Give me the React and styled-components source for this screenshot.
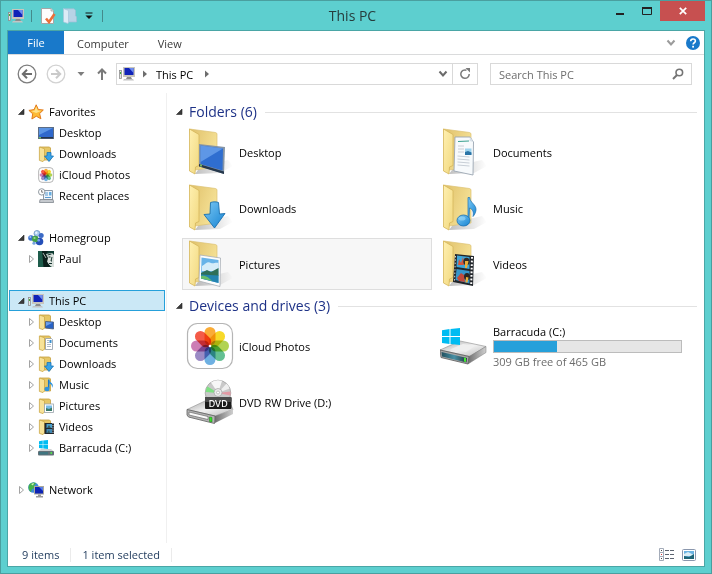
import React, { useState } from 'react';
import styled, { createGlobalStyle } from 'styled-components';

const GlobalStyle = createGlobalStyle`
  * {
    box-sizing: border-box;
  }

  body {
    margin: 0;
    background: #5dcfcf;
  }

  body, button, input {
    font-family: "Open Sans", "Noto Sans", sans-serif;
    font-size: 11px;
    color: #000;
  }

  button {
    padding: 0;
    border: none;
    background: none;
    cursor: default;
  }

  svg {
    display: block;
    flex: none;
  }
`;

const Window = styled.div`
  display: flex;
  flex-direction: column;
  min-height: 100vh;
  padding: 0 6px 6px;
  border: 1px solid #4a9f9f;
  background: #5dcfcf;
`;

const TitleBar = styled.header`
  display: grid;
  grid-template-columns: 1fr auto 1fr;
  height: 29px;
`;

const QuickAccess = styled.div`
  display: flex;
  align-items: center;
  gap: 7px;
  padding: 1px 0 0 1px;
`;

const QuickButton = styled.button`
  display: flex;
  justify-content: center;
  width: ${(props) => props.$width || 16}px;
`;

const QuickDivider = styled.span`
  width: 1px;
  height: 12px;
  background: #448a8b;
`;

const Title = styled.h1`
  margin: 0 7px 0 0;
  font-size: 14px;
  font-weight: 400;
  line-height: 29px;
  color: #263c3c;
`;

const WindowButtons = styled.div`
  display: flex;
  justify-content: flex-end;
`;

const WindowButton = styled.button`
  display: flex;
  align-items: center;
  justify-content: center;
  width: ${(props) => (props.$close ? 45 : 27)}px;
  height: 20px;
  background: ${(props) => (props.$close ? '#c75050' : 'transparent')};
`;

const Panel = styled.div`
  display: flex;
  flex: 1;
  flex-direction: column;
  border: 1px solid #4aa6a6;
  background: #fff;
`;

const Ribbon = styled.div`
  display: flex;
  align-items: center;
  height: 24px;
  border-bottom: 1px solid #dadbdc;
`;

const RibbonTab = styled.button`
  align-self: stretch;
  min-width: 56px;
  padding: 0 13px;
  line-height: 22px;
  color: ${(props) => (props.$file ? '#fff' : '#3b3b3b')};
  background: ${(props) => (props.$file ? '#1979ca' : 'transparent')};

  & + & {
    padding-top: 2px;
  }
`;

const IconButton = styled.button`
  display: flex;
  align-items: center;
  justify-content: center;
  width: ${(props) => props.$width || 22}px;
  height: 20px;
`;

const Spacer = styled.div`
  flex: 1;
`;

const AddressRow = styled.div`
  display: flex;
  align-items: center;
  height: 38px;
  padding: 0 12px 0 8px;
`;

const AddressBox = styled.div`
  display: flex;
  flex: 1;
  align-items: center;
  height: 22px;
  margin-right: 12px;
  padding-left: 2px;
  border: 1px solid #d9d9d9;
`;

const LocationButton = styled.button`
  padding-right: 4px;
`;

const RefreshButton = styled(IconButton)`
  border-left: 1px solid #d9d9d9;
`;

const SearchBox = styled.label`
  display: flex;
  align-items: center;
  width: 202px;
  height: 22px;
  padding: 0 7px 0 8px;
  border: 1px solid #d9d9d9;
`;

const SearchInput = styled.input`
  flex: 1;
  min-width: 0;
  padding: 0;
  border: none;
  outline: none;

  &::placeholder {
    color: #6d6d6d;
    opacity: 1;
  }
`;

const Main = styled.div`
  display: flex;
  flex: 1;
`;

const NavPane = styled.nav`
  display: flex;
  flex: none;
  flex-direction: column;
  gap: 21px;
  width: 159px;
  padding: 8px 1px 8px;
  border-right: 1px solid #f0f0f0;
`;

const NavList = styled.ul`
  margin: 0;
  padding: 0;
  list-style: none;
`;

const NavItem = styled.button`
  display: flex;
  align-items: center;
  width: 100%;
  height: 21px;
  padding-left: ${(props) => (props.$child ? 18 : 8)}px;
  border: 1px solid ${(props) => (props.$active ? '#26a0da' : 'transparent')};
  background: ${(props) => (props.$active ? '#cbe8f6' : 'transparent')};
  white-space: nowrap;

  span {
    margin-left: 5px;
  }
`;

const Arrow = styled.svg`
  margin-right: 3px;
`;

const Content = styled.main`
  flex: 1;
  padding: 9px 7px 8px 9px;
`;

const GroupHeader = styled.h2`
  display: flex;
  align-items: center;
  height: 20px;
  margin: 0;
  font-size: 14px;
  font-weight: 400;
  line-height: 20px;
  color: #1e3287;

  svg {
    margin-right: 6px;
  }

  &::after {
    content: "";
    flex: 1;
    height: 1px;
    margin-left: 8px;
    background: #e2e2e2;
  }
`;

const Tiles = styled.div`
  display: grid;
  grid-template-columns: repeat(auto-fill, 250px);
  gap: 4px;
  padding: 4px 0 6px 6px;
`;

const Tile = styled.button`
  display: flex;
  align-items: center;
  gap: 5px;
  height: 52px;
  padding: 0 3px;
  border: 1px solid ${(props) => (props.$active ? '#dedede' : 'transparent')};
  background: ${(props) => (props.$active ? '#f7f7f7' : 'transparent')};
  text-align: left;
`;

const DriveInfo = styled.div`
  width: 189px;
  line-height: 17px;
`;

const DriveBar = styled.div`
  height: 13px;
  border: 1px solid #bcbcbc;
  background: #e6e6e6;
`;

const DriveFill = styled.div`
  height: 100%;
  background: #26a0da;
`;

const DriveNote = styled.div`
  color: #6d6d6d;
`;

const StatusBar = styled.footer`
  display: flex;
  align-items: center;
  height: 23px;
  padding: 0 4px 0 14px;
  color: #1e395b;
`;

const StatusText = styled.span`
  height: 14px;
  margin-right: 11px;
  padding-right: 11px;
  border-right: 1px solid #ebebeb;
  line-height: 14px;
`;

/* ---------- small icons ---------- */

const PcIcon = () => (
  <svg width="16" height="16" viewBox="0 0 16 16">
    <rect x="0.5" y="4.5" width="2" height="8" fill="#e4e4e4" stroke="#8d8d8d" strokeWidth="0.8" />
    <rect x="1" y="6" width="1" height="2" fill="#3fae39" />
    <path d="M4 1h12v10H4z" fill="#c9c6bd" />
    <path d="M5.500 2h9v7h-9z" fill="#1023b8" />
    <path d="M10 2h4.500v5z" fill="#6f8df0" />
    <path d="M8 11h4l1 2H7z" fill="#8c8c8c" />
    <path d="M5 13h9l1 1.500H4z" fill="#c4c4c4" />
  </svg>
);

const StarIcon = () => (
  <svg width="16" height="16" viewBox="0 0 16 16">
    <path d="M8.200 0.800l2.100 4.700 5 .5-3.700 3.600 1.300 5.200L8.300 12.200 3.900 15l.8-5.200L.9 6.400l5.200-.8z" fill="#fdbb35" stroke="#e27a1c" strokeWidth="1" strokeLinejoin="round" />
    <path d="M8.200 2.500l1.500 3.900 3.800.3-5.300 2.200-5-1.900 3.500-.6z" fill="#ffe38b" />
  </svg>
);

const DesktopIcon = () => (
  <svg width="16" height="16" viewBox="0 0 16 16">
    <rect x="0.500" y="2.500" width="15" height="11" fill="#2f68cc" stroke="#5c6d85" />
    <path d="M1 3h14L1 10z" fill="#5b94e4" />
    <rect x="1" y="12" width="14" height="1.500" fill="#26344c" />
    <rect x="1" y="12" width="2" height="1.500" fill="#6db868" />
  </svg>
);

const overlays = {
  desktop: (
    <>
      <path d="M7.500 7.500l8 .5v7l-8-1z" fill="#2862c4" stroke="#4b5d78" strokeWidth="0.800" />
      <path d="M8 8l6.500.7L8 12z" fill="#6ca0ec" />
    </>
  ),
  documents: (
    <>
      <path d="M7.500 3.500h6l1 1v10h-7z" fill="#fff" stroke="#8f9ca9" strokeWidth="0.800" />
      <path d="M9 5.500h2M9 7.500h2M9 9.500h4M9 11.500h4" stroke="#98a8bd" strokeWidth="0.800" />
      <rect x="11.500" y="5" width="2" height="3" fill="#3a8fcf" />
    </>
  ),
  downloads: <path d="M9 6.500h4V10h2.500L11 15.500 6.500 10H9z" fill="#38a3e8" stroke="#1c73b4" strokeWidth="0.800" />,
  music: (
    <>
      <path d="M10.700 2.500v9" stroke="#1c78c4" strokeWidth="1.500" />
      <path d="M11 2c0 4 6 4 3 9 .3-3-1-4-3-4.500z" fill="#2c93de" />
      <ellipse cx="9" cy="12" rx="2.600" ry="2.200" fill="#2c93de" />
    </>
  ),
  pictures: (
    <>
      <rect x="6.500" y="6" width="9" height="8.500" fill="#fff" stroke="#9ba5ad" strokeWidth="0.800" />
      <rect x="8" y="7.500" width="6" height="5.500" fill="#77bce8" />
      <path d="M8 10l3 1 3-1.500V13H8z" fill="#3c7c6a" />
    </>
  ),
  videos: (
    <>
      <rect x="6.500" y="4" width="9.500" height="11" fill="#22272d" />
      <rect x="8.500" y="5" width="5.500" height="4" fill="#4aa0cc" />
      <rect x="8.500" y="10" width="5.500" height="4" fill="#4089b4" />
      <path d="M9 9l2-3 2 3zM9 14l2-3 1 3z" fill="#385b5f" />
      <path d="M15 4v11" stroke="#fff" strokeWidth="1" strokeDasharray="1 1.200" />
    </>
  ),
};

const SmallFolder = ({ kind }) => (
  <svg width="16" height="16" viewBox="0 0 16 16">
    <path d="M2 1h9.500l1 1v12H5z" fill="#e6c766" stroke="#c49f3f" strokeWidth="0.800" />
    <path d="M1.400.9l5.100 1.900v11L5 15.600l-3.600-1.200z" fill="#f7e298" stroke="#cba848" strokeWidth="0.800" />
    {overlays[kind]}
  </svg>
);

const petals = ['#f9a01b', '#f6d40b', '#a6cd3a', '#4eb784', '#5aa5de', '#8d7bbd', '#c56bab', '#f2442f'];

const Petal = styled.rect`
  mix-blend-mode: multiply;
`;

const PhotosIcon = ({ size = 16 }) => (
  <svg width={size} height={size} viewBox="0 0 48 48">
    <rect
      x={size === 16 ? 2 : 1.5}
      y={size === 16 ? 2 : 1.5}
      width={size === 16 ? 44 : 45}
      height={size === 16 ? 44 : 45}
      rx="10"
      fill="#fff"
      stroke="#b5b5b5"
      strokeWidth={size === 16 ? 3 : 1.2}
    />
    {petals.map((color, i) => (
      <Petal
        key={color}
        x="18.500"
        y="5"
        width="11"
        height="18.500"
        rx="5.500"
        fill={color}
        fillOpacity="0.880"
        transform={`rotate(${i * 45} 24 24)`}
      />
    ))}
    <circle cx="24" cy="24" r="1.300" fill="#fff" />
  </svg>
);

const RecentIcon = () => (
  <svg width="16" height="16" viewBox="0 0 16 16">
    <path d="M5.500 2.500h9v9h-9z" fill="#eef4fa" stroke="#8c98a5" />
    <path d="M7 5h3M7 7h3M7 9.500h6" stroke="#5b9bd0" />
    <rect x="11" y="4" width="2.500" height="3.500" fill="#66aee2" />
    <path d="M2 11.500h13l.7 3H1.500z" fill="#c5c9ce" stroke="#81888f" strokeWidth="0.800" />
    <circle cx="3.700" cy="3.900" r="3.200" fill="#fff" stroke="#8f989f" />
    <path d="M3.700 2v2.200h1.500" fill="none" stroke="#555" strokeWidth="0.800" />
  </svg>
);

const HomegroupIcon = () => (
  <svg width="16" height="16" viewBox="0 0 16 16">
    <circle cx="9" cy="3.500" r="3" fill="#a6c9ee" stroke="#6890bd" strokeWidth="0.800" />
    <circle cx="3" cy="8" r="2.800" fill="#3b72cf" />
    <circle cx="13.200" cy="5.500" r="2.500" fill="#3b6ac6" />
    <circle cx="11.500" cy="11.500" r="3.800" fill="#244fb8" />
    <circle cx="7.200" cy="9" r="3.200" fill="#43a047" />
    <circle cx="6" cy="13.200" r="1.600" fill="#76a4df" />
    <circle cx="2.300" cy="7" r="1" fill="#9fc3f4" />
    <circle cx="10.700" cy="10.300" r="1.300" fill="#7ba2ea" />
    <circle cx="6.500" cy="8" r="1.100" fill="#97db96" />
    <circle cx="8.300" cy="2.700" r="1.200" fill="#e9f5ff" />
  </svg>
);

const AvatarIcon = () => (
  <svg width="16" height="16" viewBox="0 0 16 16">
    <rect width="16" height="16" fill="#0e3b31" />
    <path d="M8 3l6-1 2 2v12h-2l-3-2-3-5z" fill="#d9e0dc" />
    <path d="M4 0h6l-2 3 2 4-1 4 3 4-1 1H5z" fill="#0b1f1b" />
    <path d="M9.500 4l4-1M10.500 6h2M14 6l-1 4h1M11 12.500h3" stroke="#15332d" fill="none" />
    <path d="M0 0h4l1.500 16H0z" fill="#1e5c4b" />
    <path d="M5 2l3 5" stroke="#cfd8d4" strokeWidth="0.800" />
  </svg>
);

const WindowsFlag = ({ x, y, w, h }) => (
  <svg x={x} y={y} width={w} height={h} viewBox="0 0 18 16" preserveAspectRatio="none">
    <path d="M0 2.200L7.500 1v6.500H0zM8.500.9L18 0v7.500H8.500zM0 8.500h7.500V15L0 14zM8.500 8.500H18V16l-9.500-.9z" fill="#00bcf2" />
  </svg>
);

const SmallDrive = () => (
  <svg width="16" height="16" viewBox="0 0 16 16">
    <WindowsFlag x={1} y={0} w={9} h={9} />
    <path d="M3 9h10l3 2.500H0z" fill="#cfd2d4" />
    <rect y="11" width="16" height="4.500" rx="1" fill="#627078" />
    <rect x="1" y="12" width="9" height="2.500" fill="#3f7580" />
    <rect x="12.500" y="12" width="1.500" height="2" fill="#4fe34a" />
  </svg>
);

const NetworkIcon = () => (
  <svg width="16" height="16" viewBox="0 0 16 16">
    <circle cx="5.500" cy="5.500" r="5.300" fill="#3c8bd8" />
    <path d="M1 3c2-3 5-3 7-2L6 4l1 2-3 1-1 3C1 9-.2 6 1 3z" fill="#44b04a" />
    <path d="M3 2l3-1-1 2.500z" fill="#d8f2c4" />
    <rect x="6.500" y="4.500" width="9" height="7.500" fill="#0d23b5" stroke="#aaa79b" />
    <path d="M11 5h4v4z" fill="#587de6" />
    <path d="M10 12.500h3v1.500h2v1.500H8V14h2z" fill="#9a9a9a" />
  </svg>
);

const CheckDocIcon = () => (
  <svg width="16" height="16" viewBox="0 0 16 16">
    <path d="M1.500.5h9.500L13.500 3v12.500h-12z" fill="#fdfdfd" stroke="#a6a6a6" />
    <path d="M11 .5V3h2.500" fill="#ddd" stroke="#a6a6a6" strokeWidth="0.800" />
    <path d="M6 10.500l3 3.500 5.500-8" fill="none" stroke="#e9703a" strokeWidth="2.600" />
  </svg>
);

const BlankFolderIcon = () => (
  <svg width="14" height="16" viewBox="0 0 14 16">
    <path d="M2 .8h9l1.500 1.500v5.500l1 1V14H5z" fill="#b7d3e6" stroke="#9dbfd6" strokeWidth="0.700" />
    <path d="M.5.500l5 2v11.500L5 15.500.5 14z" fill="#dcebf6" stroke="#a6c6dc" strokeWidth="0.700" />
  </svg>
);

const Chevron = ({ dark }) => (
  <svg width="10" height="8" viewBox="0 0 10 8">
    <path d="M1.500 1.500L5 5.500l3.500-4" fill="none" stroke={dark ? '#6b6b6b' : '#9b9b9b'} strokeWidth="2" />
  </svg>
);

const Crumb = () => (
  <svg width="21" height="10" viewBox="0 0 21 10">
    <path d="M8 1.500l4 3.500-4 3.500z" fill="#6d6d6d" />
  </svg>
);

const TreeArrow = ({ state }) => (
  <Arrow width="7" height="10" viewBox="0 0 7 10">
    {state === 'open' && <path d="M6 2v5.500H.5z" fill="#3a3a3a" stroke="#262626" strokeWidth="0.600" />}
    {state === 'closed' && <path d="M1.500 1.500l4 3.500-4 3.500z" fill="#fff" stroke="#a2a2a2" />}
  </Arrow>
);

/* ---------- large icons ---------- */

const bigOverlays = {
  desktop: (
    <>
      <path d="M13 16l26 3-1 27-25-8z" fill="#8494a6" />
      <path d="M14.500 17.500l22.500 3-.5 22-22-6.500z" fill="#2f6ed0" />
      <path d="M14.500 17.500l22.500 3L14.500 34z" fill="#5e97e6" />
      <path d="M13 36l25 7.500V46L13 38.500z" fill="#26384c" />
      <rect x="14" y="36.500" width="2" height="2" fill="#74b65e" />
    </>
  ),
  documents: (
    <>
      <path d="M15 9h15l3.500 5L33 47l-19-4z" fill="#f7fafc" stroke="#9ba6b2" strokeWidth="0.900" />
      <path d="M18 13.500l11-.5" stroke="#39a08e" strokeWidth="1.200" />
      <path d="M18 18h6M18 21h6M18 24h6M17.500 28l12 1M17.500 31l12 1M17.500 34l12 1M17.500 37l12 1" stroke="#c2cad3" strokeWidth="0.900" />
      <path d="M25 20.500h6.500v6H25z" fill="#9dd3ed" />
      <path d="M25 24l3-1 3.500 1.500v2.500H25z" fill="#2a74a6" />
      <path d="M30 9l3.500 5-4-1z" fill="#d7e0e8" />
    </>
  ),
  downloads: (
    <path d="M24.500 18.500c3-1 6-.8 8 0L33.500 30l5.500-.5L28.500 44 18 30.500l6-.5z" fill="url(#blueGloss)" stroke="#1a6fae" strokeWidth="0.900" />
  ),
  music: (
    <>
      <path d="M28 13.500h1.700c0 5 6.800 7 6.300 12.500-.3 3-2 5.500-3 6.500.8-4 0-7.500-3.500-8.500L29 37h-1z" fill="url(#blueGloss)" stroke="#1a6fae" strokeWidth="0.700" />
      <ellipse cx="23.500" cy="36.500" rx="6.500" ry="5.500" fill="url(#blueGloss)" stroke="#1a6fae" strokeWidth="0.800" />
      <ellipse cx="22" cy="34.500" rx="3.500" ry="2" fill="#a4dcf8" fillOpacity="0.600" />
    </>
  ),
  pictures: (
    <>
      <path d="M14 15l20.500 3L34 46.500 13 41z" fill="#fdfdfd" stroke="#a8afb6" strokeWidth="0.800" />
      <path d="M15.500 17.500L32.500 20v23l-17.500-4.500z" fill="#68b3e8" />
      <path d="M16 26c4-2 5-5 9-3 3 1 4-1 7.500 0v8L16 31z" fill="#d5ecf9" />
      <path d="M15 33l6-3 4 2 7.500-4v8L15 37z" fill="#2f6f58" />
      <path d="M15 34.500l17.500 1v7.500L15 38.500z" fill="#2484b0" />
      <path d="M15 36c5-1 8 2 11 5l-11-2.500z" fill="#68bd6a" />
    </>
  ),
  videos: (
    <>
      <path d="M15 14l19 2-1 30-20-4z" fill="#22262b" />
      <path d="M17 15.500l12.500 1.500v12L16.500 27z" fill="#3ea6d8" />
      <path d="M16.500 29L29.500 31v12.500L15.500 40z" fill="#3896ca" />
      <path d="M18 25l1-6 2 4 2-6 1 8z" fill="#d8553b" />
      <ellipse cx="26.500" cy="21.500" rx="3.200" ry="3.800" fill="#322a25" />
      <path d="M25 21h3.500l-1.500 7h-2z" fill="#eab13a" />
      <path d="M17 38l4-5 3 2 1 7-6-1z" fill="#c34a3b" />
      <ellipse cx="27" cy="36.500" rx="3" ry="3.500" fill="#2d2621" />
      <path d="M26 37l2.500.5-1 5h-2z" fill="#eab13a" />
      <path d="M32 17l-.8 28" stroke="#fff" strokeWidth="2" strokeDasharray="1.800 1.800" />
      <path d="M15.500 16L14.500 41" stroke="#cfd6da" strokeWidth="1" strokeDasharray="1.500 1.800" />
    </>
  ),
};

const BigFolder = ({ kind }) => (
  <svg width="48" height="48" viewBox="0 0 48 48">
    <defs>
      <linearGradient id="folderFront" x1="0" y1="0" x2="1" y2="1">
        <stop offset="0" stopColor="#fff0b0" />
        <stop offset="1" stopColor="#f1d87f" />
      </linearGradient>
      <linearGradient id="folderBack" x1="0" y1="0" x2="1" y2="0.500">
        <stop offset="0" stopColor="#dfc069" />
        <stop offset="1" stopColor="#f6e297" />
      </linearGradient>
      <linearGradient id="blueGloss" x1="0" y1="0" x2="1" y2="1">
        <stop offset="0" stopColor="#7cc9f4" />
        <stop offset="1" stopColor="#1683d3" />
      </linearGradient>
      <linearGradient id="shade" x1="0" y1="0" x2="1" y2="0">
        <stop offset="0" stopColor="#000" stopOpacity="0.250" />
        <stop offset="1" stopColor="#000" stopOpacity="0" />
      </linearGradient>
    </defs>
    <path d="M9 46l6-8 27-6 5 6-13 7z" fill="url(#shade)" />
    <path d="M3.500 1l26 3.500 1.500 1V39L9 42z" fill="url(#folderBack)" stroke="#dcc272" strokeWidth="0.700" />
    <path d="M3.500 1l9.500 5.500v31L9.500 39 9 46l-5.500-3z" fill="url(#folderFront)" stroke="#d6b65a" strokeWidth="0.800" />
    {bigOverlays[kind]}
  </svg>
);

const DriveIcon = ({ dvd }) => (
  <svg width="48" height="48" viewBox="0 0 48 48">
    <defs>
      <linearGradient id="metal" x1="0" y1="0" x2="1" y2="1">
        <stop offset="0" stopColor="#a8a8a8" />
        <stop offset="0.500" stopColor="#f1f1f1" />
        <stop offset="1" stopColor="#bababa" />
      </linearGradient>
      <linearGradient id="metalSide" x1="0" y1="0" x2="1" y2="0">
        <stop offset="0" stopColor="#6f6f6f" />
        <stop offset="1" stopColor="#cfcfcf" />
      </linearGradient>
      <linearGradient id="driveGlass" x1="0" y1="0" x2="1" y2="0">
        <stop offset="0" stopColor="#23505e" />
        <stop offset="0.500" stopColor="#4790a5" />
        <stop offset="1" stopColor="#26363b" />
      </linearGradient>
    </defs>
    {dvd ? (
      <>
        <path d="M1 31.500L19 23l26 4 2 4.500L29 38z" fill="url(#metal)" stroke="#9b9b9b" strokeWidth="0.700" />
        <path d="M29 38l18-6.500V36L29 45z" fill="url(#metalSide)" />
        <path d="M1 31.500L29 38l-.5 7.500L2.500 39 1 37z" fill="#b5b5b5" stroke="#5e5e5e" strokeWidth="0.800" />
        <path d="M3 34l19 4.500v3L3 37z" fill="#fafafa" stroke="#686868" strokeWidth="0.700" />
        <path d="M23.500 39l2.500.5v4.500l-2.500-.5z" fill="#38e02b" stroke="#167a10" strokeWidth="0.500" />
        <circle cx="32" cy="15" r="12.800" fill="#c9c9c9" stroke="#9b9b9b" strokeWidth="0.700" />
        <path d="M32 15L25 4.500A12.500 12.500 0 0 1 36 3z" fill="#f7f7f7" />
        <path d="M32 15L19.500 14a12.500 12.500 0 0 1 2-5.500z" fill="#7fe083" />
        <path d="M32 15l8.500-9.500a12.500 12.500 0 0 1 3 5z" fill="#efefef" />
        <path d="M32 15l12.500-1.500v4z" fill="#e39aa5" />
        <circle cx="32" cy="14.500" r="4" fill="#ececec" stroke="#a0a0a0" strokeWidth="0.700" />
        <circle cx="32" cy="14.500" r="1.500" fill="#fff" stroke="#909090" strokeWidth="0.500" />
        <rect x="19" y="19" width="26.500" height="12" rx="1" fill="#1b1b1b" />
        <rect x="19" y="19" width="26.500" height="5" rx="1" fill="#4b4b4b" />
        <text x="32.200" y="28.500" textAnchor="middle" fontSize="9" fontFamily="Inter, sans-serif" fontWeight="500" fill="#fff">DVD</text>
      </>
    ) : (
      <>
        <path d="M0 28l20-9 26 5.500L30 34.500z" fill="url(#metal)" stroke="#9b9b9b" strokeWidth="0.700" />
        <path d="M10 27.500l13-5.500 12 2-9 6z" fill="#efefef" />
        <path d="M29 34.500l17-10v6L28 42z" fill="url(#metalSide)" stroke="#7a7a7a" strokeWidth="0.500" />
        <path d="M0 28l29 6.500L28 42 1 35.500z" fill="#a8a8a8" stroke="#5a5a5a" strokeWidth="0.800" />
        <path d="M1.500 30L27 36l-.5 4.500L2 34.500z" fill="url(#driveGlass)" />
        <path d="M24 35.500l2 .5v4l-2-.5z" fill="#42ee32" />
        <WindowsFlag x={2} y={6} w={18} h={17} />
      </>
    )}
  </svg>
);

/* ---------- data ---------- */

const navGroups = [
  {
    name: 'Favorites',
    icon: <StarIcon />,
    state: 'open',
    items: [
      { name: 'Desktop', icon: <DesktopIcon /> },
      { name: 'Downloads', icon: <SmallFolder kind="downloads" /> },
      { name: 'iCloud Photos', icon: <PhotosIcon /> },
      { name: 'Recent places', icon: <RecentIcon /> },
    ],
  },
  {
    name: 'Homegroup',
    icon: <HomegroupIcon />,
    state: 'open',
    items: [{ name: 'Paul', icon: <AvatarIcon />, state: 'closed' }],
  },
  {
    name: 'This PC',
    icon: <PcIcon />,
    state: 'open',
    items: [
      ...['Desktop', 'Documents', 'Downloads', 'Music', 'Pictures', 'Videos'].map((name) => ({
        name,
        icon: <SmallFolder kind={name.toLowerCase()} />,
        state: 'closed',
      })),
      { name: 'Barracuda (C:)', icon: <SmallDrive />, state: 'closed' },
    ],
  },
  { name: 'Network', icon: <NetworkIcon />, state: 'closed', items: [] },
];

const folders = ['Desktop', 'Documents', 'Downloads', 'Music', 'Pictures', 'Videos'];

const drive = { name: 'Barracuda (C:)', free: 309, total: 465 };

function App() {
  const [location, setLocation] = useState('This PC');
  const [selected, setSelected] = useState('Pictures');
  const [query, setQuery] = useState('');

  const usedPercent = ((drive.total - drive.free) / drive.total) * 100;

  return (
    <>
      <GlobalStyle />
      <Window>
        <TitleBar>
          <QuickAccess>
            <QuickButton aria-label="System menu"><PcIcon /></QuickButton>
            <QuickDivider />
            <QuickButton aria-label="Properties" $width={18}><CheckDocIcon /></QuickButton>
            <QuickButton aria-label="New folder" $width={12}><BlankFolderIcon /></QuickButton>
            <QuickButton aria-label="Customize toolbar" $width={12}>
              <svg width="8" height="8" viewBox="0 0 8 8">
                <path d="M0.500 1h7" stroke="#111" />
                <path d="M0.500 3.500h7L4 7z" fill="#111" />
              </svg>
            </QuickButton>
            <QuickDivider />
          </QuickAccess>
          <Title>This PC</Title>
          <WindowButtons>
            <WindowButton aria-label="Minimize">
              <svg width="10" height="10" viewBox="0 0 10 10"><path d="M1 8h8" stroke="#222" strokeWidth="2" /></svg>
            </WindowButton>
            <WindowButton aria-label="Maximize">
              <svg width="10" height="8" viewBox="0 0 10 8">
                <path d="M.5 1v6.500h9V1" fill="none" stroke="#222" />
                <path d="M0 1h10" stroke="#222" strokeWidth="2" />
              </svg>
            </WindowButton>
            <WindowButton aria-label="Close" $close>
              <svg width="8" height="8" viewBox="0 0 8 8"><path d="M.8.800l6.400 6.400M7.200.800L.8 7.200" stroke="#fff" strokeWidth="1.700" /></svg>
            </WindowButton>
          </WindowButtons>
        </TitleBar>

        <Panel>
          <Ribbon>
            <RibbonTab $file>File</RibbonTab>
            <RibbonTab>Computer</RibbonTab>
            <RibbonTab>View</RibbonTab>
            <Spacer />
            <IconButton aria-label="Expand ribbon"><Chevron /></IconButton>
            <IconButton aria-label="Help">
              <svg width="14" height="14" viewBox="0 0 14 14">
                <circle cx="7" cy="7" r="7" fill="#1979ca" />
                <path d="M4.700 5.300c0-3 4.700-3 4.700-.3 0 1.700-2.300 1.800-2.300 3.500" fill="none" stroke="#fff" strokeWidth="1.600" />
                <rect x="6.200" y="9.800" width="1.800" height="1.800" fill="#fff" />
              </svg>
            </IconButton>
          </Ribbon>

          <AddressRow>
            <IconButton aria-label="Back">
              <svg width="20" height="20" viewBox="0 0 20 20">
                <circle cx="10" cy="10" r="8.800" fill="none" stroke="#7d7d7d" strokeWidth="1.300" />
                <path d="M15 10H6M10 5.800L5.800 10l4.200 4.200" fill="none" stroke="#6d6d6d" strokeWidth="2" />
              </svg>
            </IconButton>
            <IconButton aria-label="Forward" $width={36}>
              <svg width="20" height="20" viewBox="0 0 20 20">
                <circle cx="10" cy="10" r="8.800" fill="none" stroke="#d2d2d2" strokeWidth="1.300" />
                <path d="M5 10h9M10 5.800l4.200 4.200-4.200 4.200" fill="none" stroke="#cacaca" strokeWidth="2" />
              </svg>
            </IconButton>
            <IconButton aria-label="Recent locations" $width={14}>
              <svg width="8" height="6" viewBox="0 0 8 6"><path d="M.5 1h7L4 5z" fill="#7d7d7d" /></svg>
            </IconButton>
            <IconButton aria-label="Up" $width={28}>
              <svg width="10" height="12" viewBox="0 0 10 12">
                <path d="M5 12V2M1 5.500l4-4 4 4" fill="none" stroke="#7a7a7a" strokeWidth="2" />
              </svg>
            </IconButton>
            <AddressBox>
              <PcIcon />
              <Crumb />
              <LocationButton>{location}</LocationButton>
              <Crumb />
              <Spacer />
              <IconButton aria-label="Previous locations" $width={18}><Chevron dark /></IconButton>
              <RefreshButton aria-label="Refresh" $width={25}>
                <svg width="12" height="12" viewBox="0 0 12 12">
                  <path d="M7.500 2.200A4.200 4.200 0 1 0 10.200 6" fill="none" stroke="#7a7a7a" strokeWidth="1.500" />
                  <path d="M6.500 0H11v4.500z" fill="#7a7a7a" />
                </svg>
              </RefreshButton>
            </AddressBox>
            <SearchBox>
              <SearchInput
                type="text"
                aria-label="Search This PC"
                placeholder="Search This PC"
                value={query}
                onChange={(e) => setQuery(e.target.value)}
              />
              <svg width="12" height="12" viewBox="0 0 12 12">
                <circle cx="7.300" cy="4.500" r="3.300" fill="none" stroke="#747474" strokeWidth="1.600" />
                <path d="M5 7L1 11" stroke="#747474" strokeWidth="2" />
              </svg>
            </SearchBox>
          </AddressRow>

          <Main>
            <NavPane>
              {navGroups.map((group) => (
                <NavList key={group.name}>
                  <li>
                    <NavItem $active={location === group.name} onClick={() => setLocation(group.name)}>
                      <TreeArrow state={group.state} />
                      {group.icon}
                      <span>{group.name}</span>
                    </NavItem>
                  </li>
                  {group.items.map((item) => (
                    <li key={item.name}>
                      <NavItem $child>
                        <TreeArrow state={item.state} />
                        {item.icon}
                        <span>{item.name}</span>
                      </NavItem>
                    </li>
                  ))}
                </NavList>
              ))}
            </NavPane>

            <Content>
              <GroupHeader><TreeArrow state="open" />Folders (6)</GroupHeader>
              <Tiles>
                {folders.map((name) => (
                  <Tile key={name} $active={selected === name} onClick={() => setSelected(name)}>
                    <BigFolder kind={name.toLowerCase()} />
                    {name}
                  </Tile>
                ))}
              </Tiles>

              <GroupHeader><TreeArrow state="open" />Devices and drives (3)</GroupHeader>
              <Tiles>
                <Tile $active={selected === 'iCloud Photos'} onClick={() => setSelected('iCloud Photos')}>
                  <PhotosIcon size={48} />
                  iCloud Photos
                </Tile>
                <Tile $active={selected === drive.name} onClick={() => setSelected(drive.name)}>
                  <DriveIcon />
                  <DriveInfo>
                    {drive.name}
                    <DriveBar>
                      <DriveFill style={{ width: `${usedPercent}%` }} />
                    </DriveBar>
                    <DriveNote>{drive.free} GB free of {drive.total} GB</DriveNote>
                  </DriveInfo>
                </Tile>
                <Tile $active={selected === 'DVD'} onClick={() => setSelected('DVD')}>
                  <DriveIcon dvd />
                  DVD RW Drive (D:)
                </Tile>
              </Tiles>
            </Content>
          </Main>

          <StatusBar>
            <StatusText>9 items</StatusText>
            <StatusText>1 item selected</StatusText>
            <Spacer />
            <IconButton aria-label="Details view">
              <svg width="16" height="14" viewBox="0 0 16 14">
                <path d="M.5.500h4v4h-4zM.5 4.500h4v4h-4zM.5 8.500h4v4h-4z" fill="#fff" stroke="#a3abb8" />
                <path d="M2 2.500h1M2 10.500h1" stroke="#444" />
                <path d="M2 6.500h1" stroke="#d33" />
                <path d="M6 2.500h4M11 2.500h4M6 6.500h4M11 6.500h4M6 10.500h4M11 10.500h4" stroke="#5c6470" />
              </svg>
            </IconButton>
            <IconButton aria-label="Large icons view">
              <svg width="14" height="12" viewBox="0 0 14 12">
                <rect x=".5" y=".5" width="13" height="11" rx="1" fill="#fff" stroke="#8a97ad" />
                <rect x="2" y="2" width="10" height="8" fill="#6cb4e2" />
                <path d="M2 5l4-2 6 3v1H2z" fill="#d9eef7" />
                <path d="M2 7l5 1 5-3v5H2z" fill="#1e6577" />
              </svg>
            </IconButton>
          </StatusBar>
        </Panel>
      </Window>
    </>
  );
}

export default App;
